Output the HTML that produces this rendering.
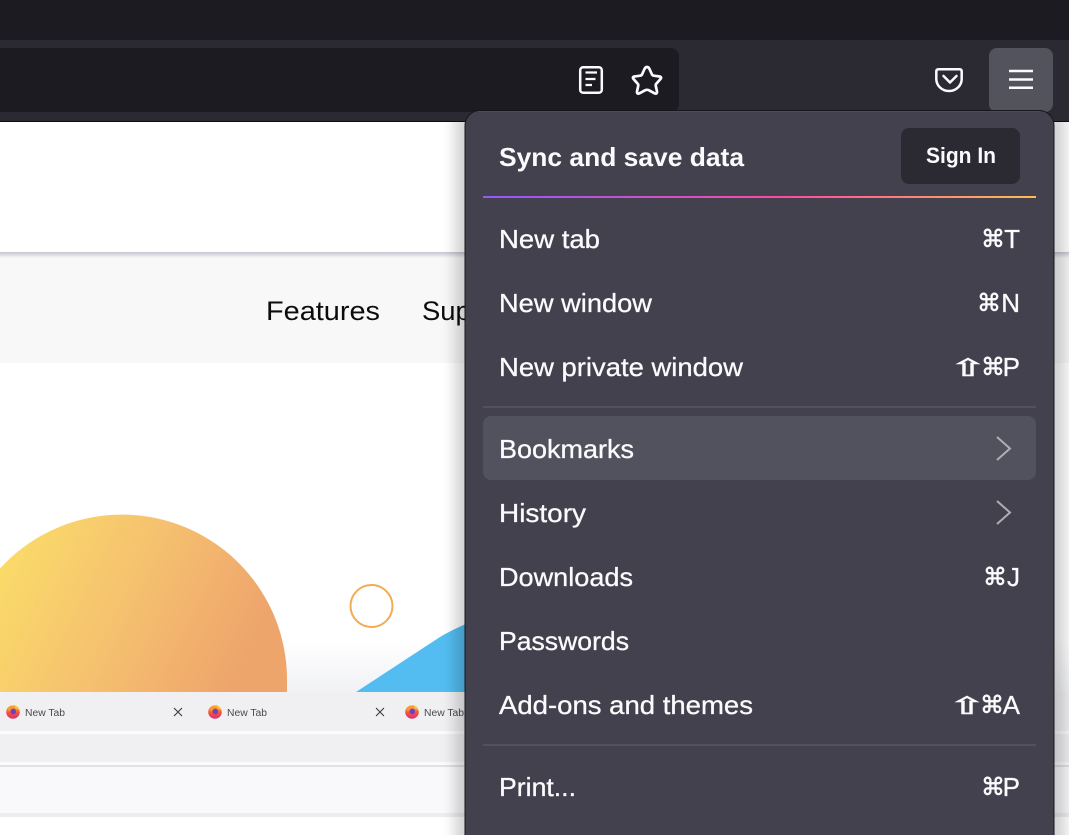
<!DOCTYPE html>
<html lang="en"><head><meta charset="utf-8"><title>Firefox menu</title>
<style>
html,body{margin:0;padding:0;width:1069px;height:835px;overflow:hidden;background:#fff}
svg{position:absolute;left:0;top:0;display:block}
text{font-family:"Liberation Sans","DejaVu Sans",sans-serif}
</style></head><body>
<svg width="1069" height="835" viewBox="0 0 1069 835" xmlns="http://www.w3.org/2000/svg">
<defs>
<linearGradient id="sun" x1="0" y1="0" x2="1" y2="0.3"><stop offset="0" stop-color="#fbdf68"/><stop offset=".55" stop-color="#f5c06f"/><stop offset="1" stop-color="#eea56c"/></linearGradient>
<linearGradient id="fade" x1="0" y1="0" x2="0" y2="1"><stop offset="0" stop-color="#f1f2f5" stop-opacity="0"/><stop offset="1" stop-color="#f1f2f5"/></linearGradient>
<linearGradient id="rule" x1="0" y1="0" x2="1" y2="0"><stop offset="0" stop-color="#9059ff"/><stop offset=".55" stop-color="#ff4aa2"/><stop offset="1" stop-color="#ffbd4f"/></linearGradient>
<linearGradient id="navsh" x1="0" y1="0" x2="0" y2="1"><stop offset="0" stop-color="#c5c5d2"/><stop offset="1" stop-color="#f8f8f8"/></linearGradient>
<linearGradient id="fx" x1="0" y1="0" x2="0" y2="1"><stop offset="0" stop-color="#f9b233"/><stop offset=".55" stop-color="#f0553f"/><stop offset="1" stop-color="#d92e7c"/></linearGradient>
<filter id="sh" x="-10%" y="-10%" width="120%" height="120%"><feGaussianBlur stdDeviation="7"/></filter>
<filter id="soft"><feGaussianBlur stdDeviation=".35"/></filter>
<clipPath id="content"><rect x="0" y="122" width="1069" height="713"/></clipPath>
<g id="fxlogo"><circle cx="7" cy="7.500" r="6.800" fill="url(#fx)"/><path d="M8 .4c2.500 1 5 3 5.600 6-1.200-1.400-2.500-2-4-2.200z" fill="#f9c13c"/><path d="M1 4c1.500-1.400 3.500-1.400 5-.5L3 7z" fill="#f59a34"/><circle cx="7.300" cy="7" r="2.700" fill="#6b3fc9"/></g>
</defs>

<!-- page content -->
<rect width="1069" height="835" fill="#fff"/>
<rect y="252" width="1069" height="111" fill="#f8f8f8"/>
<rect y="252" width="1069" height="6" fill="url(#navsh)"/>
<text x="266" y="320" font-size="27" textLength="114" lengthAdjust="spacingAndGlyphs" fill="#0c0c0d">Features</text>
<text x="422" y="320" font-size="27" textLength="96" lengthAdjust="spacingAndGlyphs" fill="#0c0c0d">Support</text>

<rect y="640" width="1069" height="52" fill="url(#fade)"/>
<path d="M0 568.500A165 165 0 0 1 287 679V692H0Z" fill="url(#sun)"/>
<circle cx="371.500" cy="606" r="21" fill="none" stroke="#f3ab55" stroke-width="2"/>
<path d="M356 692L440 637Q455 628 480 618V692Z" fill="#53bdf1"/>

<rect y="692" width="1069" height="39" fill="#f0f0f2"/>
<rect y="731" width="1069" height="3" fill="#fbfbfc"/>
<rect y="734" width="1069" height="28" fill="#f0f0f2"/>
<rect y="762" width="1069" height="3" fill="#fbfbfc"/>
<rect y="765" width="1069" height="2" fill="#e1e1e6"/>
<rect y="767" width="1069" height="46" fill="#f9f9fb"/>
<rect y="813" width="1069" height="4" fill="#ededf0"/>

<g filter="url(#soft)">
<use href="#fxlogo" x="6" y="704.500"/>
<text x="25" y="716" font-size="10" textLength="40" lengthAdjust="spacingAndGlyphs" fill="#4a4a4f">New Tab</text>
<path d="M174 708l8 8m0-8l-8 8" stroke="#3a3a40" stroke-width="1.100" fill="none"/>
<use href="#fxlogo" x="208" y="704.500"/>
<text x="227" y="716" font-size="10" textLength="40" lengthAdjust="spacingAndGlyphs" fill="#4a4a4f">New Tab</text>
<path d="M376 708l8 8m0-8l-8 8" stroke="#3a3a40" stroke-width="1.100" fill="none"/>
<use href="#fxlogo" x="405" y="704.500"/>
<text x="424" y="716" font-size="10" textLength="40" lengthAdjust="spacingAndGlyphs" fill="#4a4a4f">New Tab</text>
</g>

<!-- browser chrome -->
<rect width="1069" height="40" fill="#1c1b22"/>
<rect y="40" width="1069" height="81" fill="#2b2a33"/>
<rect y="121" width="1069" height="1" fill="#0c0c0d"/>
<path d="M0 48H671a8 8 0 0 1 8 8V104a8 8 0 0 1-8 8H0Z" fill="#1c1b22"/>
<rect x="580.200" y="67.200" width="21.600" height="25.600" rx="3" fill="none" stroke="#fbfbfe" stroke-width="2.500"/>
<path d="M585.500 72.500H597M585.500 79H595.500M585.500 85H592" stroke="#fbfbfe" stroke-width="2.200" fill="none"/>
<path d="M647 67Q648.500 67 649.500 69L652 74.500Q652.500 75.500 654 75.700L659.500 76.500Q662 77 660.500 79L656.500 83.500Q655.500 84.500 655.800 86L657 91.500Q657.300 94.500 654.500 93.300L649 90.300Q647 89.300 645 90.300L639.500 93.300Q636.700 94.500 637 91.500L638.200 86Q638.500 84.500 637.500 83.500L633.500 79Q632 77 634.500 76.500L640 75.700Q641.500 75.500 642 74.500L644.500 69Q645.500 67 647 67Z" fill="none" stroke="#fbfbfe" stroke-width="2.700" stroke-linejoin="round"/>
<path d="M938.500 69.300H959.500Q961.700 69.300 961.700 71.500V79A12.700 12 0 0 1 949 91A12.700 12 0 0 1 936.300 79V71.500Q936.300 69.300 938.500 69.300Z" fill="none" stroke="#fbfbfe" stroke-width="2.500"/>
<path d="M943.500 76L950 82.500L956.500 76" fill="none" stroke="#fbfbfe" stroke-width="2.500" stroke-linecap="round" stroke-linejoin="round"/>
<rect x="989" y="48" width="64" height="64" rx="8" fill="#53535e"/>
<path d="M1009 71H1033M1009 79.500H1033M1009 87.700H1033" stroke="#fbfbfe" stroke-width="2.500" fill="none"/>

<!-- panel -->
<g clip-path="url(#content)"><rect x="455" y="112" width="610" height="760" fill="#000" opacity=".18" filter="url(#sh)"/></g>
<rect x="465" y="110.500" width="589" height="760" rx="15" fill="#42414d" stroke="#17161c" stroke-width="1"/>
<rect x="478" y="111" width="562" height="1" fill="#4c4b57"/>

<text x="499" y="166" font-size="26" font-weight="700" textLength="245" lengthAdjust="spacingAndGlyphs" fill="#fbfbfe">Sync and save data</text>
<rect x="901" y="128" width="119" height="56" rx="8" fill="#2b2a33"/>
<text x="926" y="163" font-size="22" font-weight="700" textLength="70" lengthAdjust="spacingAndGlyphs" fill="#fbfbfe">Sign In</text>
<rect x="483" y="196" width="553" height="2" fill="url(#rule)"/>

<rect x="483" y="406" width="553" height="2" fill="#52515e"/>
<rect x="483" y="416" width="553" height="64" rx="8" fill="#52525e"/>
<rect x="483" y="744" width="553" height="2" fill="#52515e"/>

<g font-size="26" fill="#fbfbfe" stroke="#fbfbfe" stroke-width=".3">
<text x="499" y="248" textLength="101" lengthAdjust="spacingAndGlyphs">New tab</text>
<text x="499" y="312" textLength="153" lengthAdjust="spacingAndGlyphs">New window</text>
<text x="499" y="376" textLength="244" lengthAdjust="spacingAndGlyphs">New private window</text>
<text x="499" y="458" textLength="135" lengthAdjust="spacingAndGlyphs">Bookmarks</text>
<text x="499" y="522" textLength="87" lengthAdjust="spacingAndGlyphs">History</text>
<text x="499" y="586" textLength="134" lengthAdjust="spacingAndGlyphs">Downloads</text>
<text x="499" y="650" textLength="130" lengthAdjust="spacingAndGlyphs">Passwords</text>
<text x="499" y="714" textLength="254" lengthAdjust="spacingAndGlyphs">Add-ons and themes</text>
<text x="499" y="796" textLength="77" lengthAdjust="spacingAndGlyphs">Print...</text>

<text x="1020" y="248" text-anchor="end">T</text>
<text x="1020" y="312" text-anchor="end">N</text>
<text x="1020" y="376" text-anchor="end">P</text>
<text x="1020" y="586" text-anchor="end">J</text>
<text x="1020" y="714" text-anchor="end">A</text>
<text x="1020" y="796" text-anchor="end">P</text>
</g>
<g font-size="24" fill="#fbfbfe" stroke="#fbfbfe" stroke-width=".5">
<text x="981" y="247" style="font-family:'DejaVu Sans',sans-serif">⌘</text>
<text x="977" y="311" style="font-family:'DejaVu Sans',sans-serif">⌘</text>
<text x="981" y="375" style="font-family:'DejaVu Sans',sans-serif">⌘</text>
<text x="983" y="585" style="font-family:'DejaVu Sans',sans-serif">⌘</text>
<text x="980" y="713" style="font-family:'DejaVu Sans',sans-serif">⌘</text>
<text x="981" y="795" style="font-family:'DejaVu Sans',sans-serif">⌘</text>
<text transform="translate(949 376) scale(1.9 1)" style="font-family:'DejaVu Sans',sans-serif" stroke-width=".6">⇧</text>
<text transform="translate(948 714) scale(1.9 1)" style="font-family:'DejaVu Sans',sans-serif" stroke-width=".6">⇧</text>
</g>
<path d="M997 437L1010 448.500L997 460M997 501L1010 512.500L997 524" fill="none" stroke="#aeaeb4" stroke-width="2"/>
</svg>
</body></html>
